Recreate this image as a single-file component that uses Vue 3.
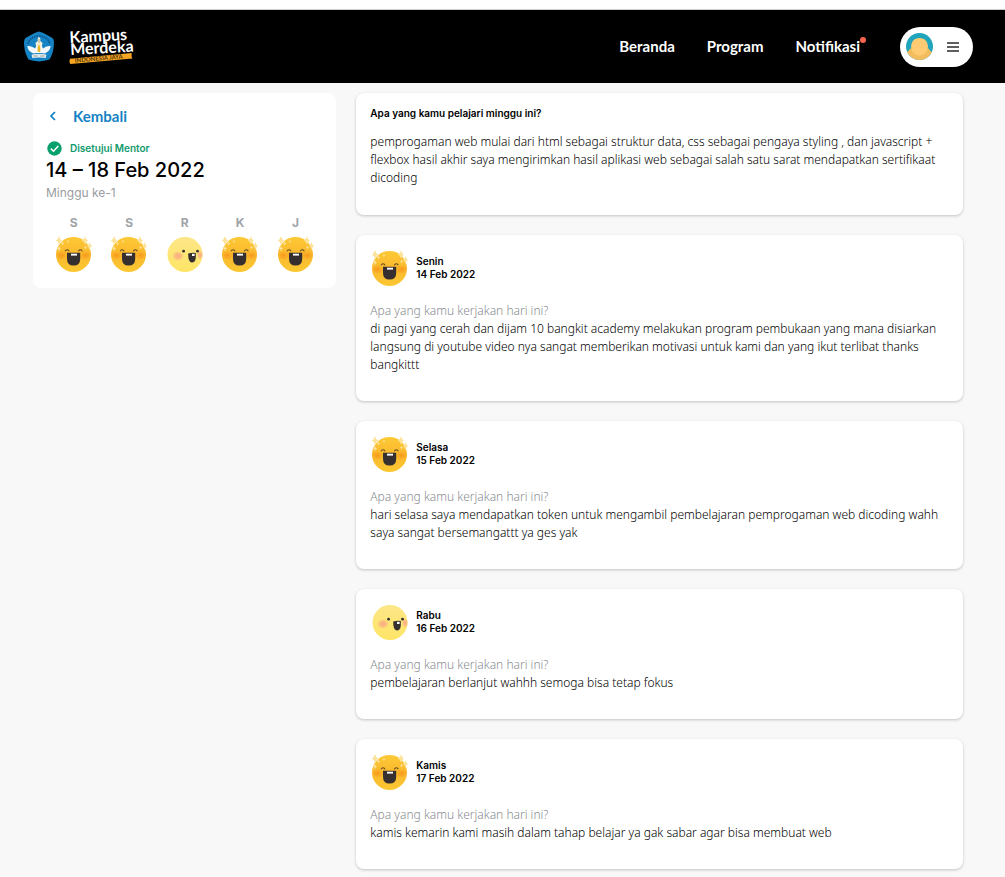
<script setup>
import { h } from 'vue'

const days = [
  { letter: 'S', mood: 'great' },
  { letter: 'S', mood: 'great' },
  { letter: 'R', mood: 'good' },
  { letter: 'K', mood: 'great' },
  { letter: 'J', mood: 'great' },
]

const entries = [
  {
    day: 'Senin',
    date: '14 Feb 2022',
    mood: 'great',
    text: 'di pagi yang cerah dan dijam 10 bangkit academy melakukan program pembukaan yang mana disiarkan langsung di youtube video nya sangat memberikan motivasi untuk kami dan yang ikut terlibat thanks bangkittt',
  },
  {
    day: 'Selasa',
    date: '15 Feb 2022',
    mood: 'great',
    text: 'hari selasa saya mendapatkan token untuk mengambil pembelajaran pemprogaman web dicoding wahh saya sangat bersemangattt ya ges yak',
  },
  {
    day: 'Rabu',
    date: '16 Feb 2022',
    mood: 'good',
    text: 'pembelajaran berlanjut wahhh semoga bisa tetap fokus',
  },
  {
    day: 'Kamis',
    date: '17 Feb 2022',
    mood: 'great',
    text: 'kamis kemarin kami masih dalam tahap belajar ya gak sabar agar bisa membuat web',
  },
]

const star = (x, y, s) =>
  h('path', {
    d: `M${x} ${y - s * 1.4}Q${x + s * 0.25} ${y - s * 0.25} ${x + s} ${y}Q${x + s * 0.25} ${y + s * 0.25} ${x} ${y + s * 1.4}Q${x - s * 0.25} ${y + s * 0.25} ${x - s} ${y}Q${x - s * 0.25} ${y - s * 0.25} ${x} ${y - s * 1.4}Z`,
    fill: '#fde29a',
  })

const MoodFace = ({ mood }) =>
  h(
    'svg',
    { width: 40, height: 40, viewBox: '0 0 40 40', 'aria-hidden': 'true' },
    mood === 'great'
      ? [
          h('circle', { cx: 19.5, cy: 20.5, r: 17.5, fill: 'url(#face-great)' }),
          h('ellipse', { cx: 7.5, cy: 21.5, rx: 6, ry: 4.5, fill: 'url(#cheek-great)' }),
          h('ellipse', { cx: 31.5, cy: 21.5, rx: 6, ry: 4.5, fill: 'url(#cheek-great)' }),
          h('path', {
            d: 'M11.3 16.9Q13.1 14.5 14.9 16.9M24.5 16.9Q26.3 14.5 28.1 16.9',
            fill: 'none',
            stroke: '#6b4f25',
            'stroke-width': 1.1,
            'stroke-linecap': 'round',
          }),
          h('path', { d: 'M13 18.8H26.2V24.8Q26.2 31.6 19.6 31.6Q13 31.6 13 24.8Z', fill: '#35302f' }),
          h('path', { d: 'M17 19.7H23V21.6H17Z', fill: '#fff' }),
          star(5, 6.5, 3.2),
          star(8.5, 9.5, 1.6),
          star(5, 14.5, 2),
          star(14, 7.5, 1.2),
          star(31, 6.5, 3),
          star(35.5, 12, 2.8),
          star(31.5, 13.5, 1.5),
        ]
      : [
          h('circle', { cx: 20, cy: 20.5, r: 17.5, fill: 'url(#face-good)' }),
          h('ellipse', { cx: 13, cy: 22, rx: 6, ry: 5, fill: 'url(#cheek-good)' }),
          h('ellipse', { cx: 35, cy: 21, rx: 3.2, ry: 4.8, fill: 'url(#cheek-good)' }),
          h('circle', { cx: 18.6, cy: 17.2, r: 1.4, fill: '#35302f' }),
          h('circle', { cx: 32.5, cy: 17.2, r: 1.4, fill: '#35302f' }),
          h('path', { d: 'M23.2 19.6Q27 18.4 30.8 19V23.4Q30.4 28.4 26.8 28.4Q23 28.2 23.2 19.6Z', fill: '#35302f' }),
          h('path', { d: 'M27 19.8H29.6V22H27Z', fill: '#fff' }),
        ]
  )
</script>

<template>
  <div class="page">
    <svg class="defs" width="0" height="0" aria-hidden="true">
      <defs>
        <linearGradient id="face-great" x1="0" y1="0" x2="0" y2="1">
          <stop offset="0" stop-color="#fdc935" />
          <stop offset="0.5" stop-color="#fab82e" />
          <stop offset="1" stop-color="#fbc832" />
        </linearGradient>
        <linearGradient id="face-good" x1="0" y1="0" x2="0" y2="1">
          <stop offset="0" stop-color="#fde688" />
          <stop offset="1" stop-color="#fee566" />
        </linearGradient>
        <radialGradient id="cheek-great">
          <stop offset="0" stop-color="#f79a1c" />
          <stop offset="1" stop-color="#f79a1c" stop-opacity="0" />
        </radialGradient>
        <radialGradient id="cheek-good">
          <stop offset="0" stop-color="#fbad82" />
          <stop offset="0.5" stop-color="#fbb580" stop-opacity="0.85" />
          <stop offset="1" stop-color="#fbb580" stop-opacity="0" />
        </radialGradient>
      </defs>
    </svg>

    <header class="topbar">
      <a class="brand" href="#" aria-label="Kampus Merdeka">
        <svg width="32" height="32" viewBox="0 0 32 32" aria-hidden="true">
          <path d="M16 .6Q18 .6 29.4 7Q31.6 8.8 30.8 15Q30 23 26.4 28.6Q22 30.4 16 30.4Q10 30.4 5.6 28.6Q2 23 1.2 15Q.4 8.8 2.6 7Q14 .6 16 .6Z" fill="#1583c4" />
          <path d="M5 13Q7 5.4 16 5Q25 5.4 27 13" fill="none" stroke="#0c5488" stroke-width="1.6" stroke-dasharray="1.6 .8" />
          <path d="M4.4 15Q9 14.4 12 17.5L13.6 14H18.4L20 17.5Q23 14.4 27.6 15Q27.4 19.4 23.5 21.5Q21 23 19 22H13Q11 23 8.5 21.5Q4.6 19.4 4.4 15Z" fill="#f4f8fa" />
          <path d="M16 5.6Q18 8 17.2 10L19.6 12L18.6 16H13.4L12.4 12L14.8 10Q14 8 16 5.6Z" fill="#f3efd9" />
          <path d="M16 13Q18.2 17 17.2 21H14.8Q13.8 17 16 13Z" fill="#e9b820" />
          <path d="M8.6 23.6L15.4 22.8L16 23.6L16.6 22.8L23.4 23.6L22.8 27L16 26.4L9.2 27Z" fill="#dfe9ee" />
          <path d="M10.4 25H14.8M17.2 25H21.6M16 8V12" stroke="#8b8a68" stroke-width=".7" />
        </svg>
        <svg class="wordmark" width="76" height="56" viewBox="0 -8 76 56" aria-hidden="true">
          <g transform="rotate(-3 2 20)">
            <text class="wordmark-name" x="2" y="16">Kampus</text>
            <text class="wordmark-name" x="2" y="28">Merdeka</text>
          </g>
          <path d="M2 31.8L63.6 26V29.6L64.4 31.4L2.2 37L1.4 34.6Z" fill="#f6a623" />
          <text class="wordmark-sub" x="7" y="35.6" transform="rotate(-5 7 35)">INDONESIA JAYA</text>
        </svg>
      </a>

      <nav class="nav">
        <a href="#">Beranda</a>
        <a href="#">Program</a>
        <a class="notif" href="#">Notifikasi<span class="dot"></span></a>
      </nav>

      <button class="account" type="button" aria-label="Menu akun">
        <svg width="28" height="28" viewBox="0 0 28 28" aria-hidden="true">
          <defs>
            <clipPath id="avatar-clip"><circle cx="14.5" cy="13.5" r="13.5" /></clipPath>
          </defs>
          <g clip-path="url(#avatar-clip)">
            <rect width="28" height="28" fill="#20a5bc" />
            <path d="M0 28V20Q4 18 5.4 15.5H23.6Q25 18 28 20V28Z" fill="#f3bd5e" />
            <path d="M14.5 5C20.3 5 22.9 9.2 22.9 13.6C22.9 18.8 19.1 22.4 14.5 22.4C9.9 22.4 6.1 18.8 6.1 13.6C6.1 9.2 8.7 5 14.5 5Z" fill="#fecb72" />
          </g>
        </svg>
        <svg width="12" height="10" viewBox="0 0 12 10" aria-hidden="true">
          <path d="M0 1H12M0 5H12M0 9H12" stroke="#2b2b2b" stroke-width="1.6" />
        </svg>
      </button>
    </header>

    <div class="content">
      <aside class="card summary">
        <a class="back" href="#">
          <svg width="14" height="14" viewBox="0 0 14 14" aria-hidden="true">
            <path d="M9 3L5 7L9 11" fill="none" stroke="#0b7fc3" stroke-width="1.7" />
          </svg>
          <span>Kembali</span>
        </a>
        <div class="status">
          <svg width="16" height="16" viewBox="0 0 16 16" aria-hidden="true">
            <circle cx="8.5" cy="8.5" r="7.2" fill="#08a06c" />
            <path d="M4.8 8.6L7.5 11.2L12.3 6.1" fill="none" stroke="#fff" stroke-width="1.5" />
          </svg>
          <span>Disetujui Mentor</span>
        </div>
        <h1>14 – 18 Feb 2022</h1>
        <p class="week">Minggu ke-1</p>
        <ul class="days">
          <li v-for="(d, i) in days" :key="i">
            <span>{{ d.letter }}</span>
            <MoodFace :mood="d.mood" />
          </li>
        </ul>
      </aside>

      <main class="log">
        <section class="card weekly">
          <h2>Apa yang kamu pelajari minggu ini?</h2>
          <p>
            pemprogaman web mulai dari html sebagai struktur data, css sebagai pengaya styling , dan javascript +
            flexbox hasil akhir saya mengirimkan hasil aplikasi web sebagai salah satu sarat mendapatkan sertifikaat
            dicoding
          </p>
        </section>
        <article v-for="e in entries" :key="e.date" class="card entry">
          <div class="entry-head">
            <MoodFace :mood="e.mood" />
            <div>
              <div>{{ e.day }}</div>
              <div>{{ e.date }}</div>
            </div>
          </div>
          <p class="question">Apa yang kamu kerjakan hari ini?</p>
          <p>{{ e.text }}</p>
        </article>
      </main>
    </div>
  </div>
</template>

<style>
body {
  margin: 0;
  background: #f8f8f8;
}
</style>

<style scoped>
.page {
  min-height: 100vh;
  box-sizing: border-box;
  border-top: 9px solid #fff;
  background: #f8f8f8;
  color: #000;
  font-family: Inter, "Open Sans", sans-serif;
  font-size: 12px;
  line-height: 18px;
}
.defs {
  position: absolute;
}
.topbar {
  display: flex;
  align-items: center;
  height: 73px;
  padding: 0 32px 0 23px;
  border-top: 1px solid #ccc;
  background: #000;
}
.brand {
  display: flex;
  align-items: center;
  gap: 13px;
  margin-right: auto;
}
.wordmark-name {
  fill: #fff;
  font-family: Lato, sans-serif;
  font-size: 16px;
  font-weight: 700;
}
.wordmark-sub {
  fill: #4d3208;
  font-family: Lato, sans-serif;
  font-size: 6px;
  font-weight: 700;
}
.nav {
  display: flex;
  gap: 32px;
  margin-right: 40px;
  padding-bottom: 2px;
}
.nav a {
  color: #fff;
  font-family: Lato, sans-serif;
  font-size: 15px;
  font-weight: 700;
  text-decoration: none;
}
.notif {
  position: relative;
}
.dot {
  position: absolute;
  top: 0;
  right: -6px;
  width: 6px;
  height: 6px;
  border-radius: 50%;
  background: #f8634d;
}
.account {
  display: flex;
  align-items: center;
  justify-content: space-between;
  width: 73px;
  height: 40px;
  padding: 0 14px 0 5px;
  border: 0;
  border-radius: 20px;
  background: #fff;
}
.content {
  display: grid;
  grid-template-columns: 1fr 2fr;
  gap: 20px;
  align-items: start;
  padding: 10px 42px 20px 33px;
}
.card {
  border-radius: 8px;
  background: #fff;
}
.summary {
  padding: 14px 13px;
}
.back {
  display: flex;
  align-items: center;
  gap: 13px;
  color: #1582c5;
  font-family: Lato, sans-serif;
  font-size: 15px;
  font-weight: 700;
  text-decoration: none;
}
.status {
  display: flex;
  align-items: center;
  gap: 8px;
  margin-top: 14px;
  color: #119a6c;
  font-size: 10px;
  font-weight: 600;
}
h1,
h2,
p,
ul {
  margin: 0;
  padding: 0;
}
h1 {
  font-size: 20px;
  font-weight: 500;
  line-height: 27px;
}
.week,
.question {
  color: #999da1;
}
.log .question {
  color: #888c90;
  line-height: 19px;
}
.days {
  display: grid;
  grid-template-columns: repeat(5, 1fr);
  margin-top: 12px;
  list-style: none;
}
.days li {
  display: flex;
  flex-direction: column;
  align-items: center;
  gap: 2px;
  color: #a0a4a8;
  font-weight: 700;
}
.log {
  display: flex;
  flex-direction: column;
  gap: 20px;
}
.log .card {
  padding: 13px 14px 27px;
  box-shadow: 0 1px 3px rgba(0, 0, 0, 0.22);
}
.log .weekly {
  padding-bottom: 28px;
}
.log p {
  font-family: "Noto Sans", sans-serif;
  font-weight: 300;
}
.weekly h2 {
  margin-bottom: 13px;
  font-size: 10px;
  font-weight: 600;
  line-height: 14px;
}
.entry-head {
  display: flex;
  align-items: center;
  gap: 6px;
  margin-bottom: 13px;
  font-size: 10px;
  font-weight: 600;
  line-height: 13px;
}
</style>
